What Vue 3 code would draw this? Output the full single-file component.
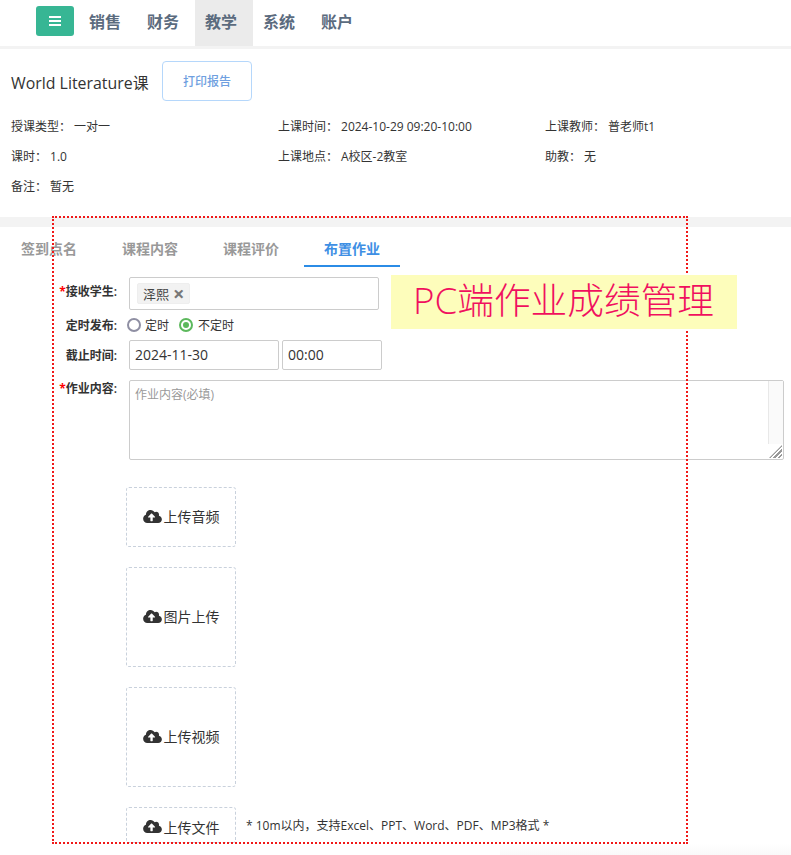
<script setup>
const navItems = ['销售', '财务', '教学', '系统', '账户']

const infoRows = [
  { label: '授课类型', value: '一对一' },
  { label: '上课时间', value: '2024-10-29 09:20-10:00' },
  { label: '上课教师', value: '普老师t1' },
  { label: '课时', value: '1.0' },
  { label: '上课地点', value: 'A校区-2教室' },
  { label: '助教', value: '无' },
  { label: '备注', value: '暂无' },
]

const tabs = ['签到点名', '课程内容', '课程评价', '布置作业']

const uploads = [
  { text: '上传音频', cls: 'short' },
  { text: '图片上传', cls: 'tall' },
  { text: '上传视频', cls: 'tall' },
]
</script>

<template>
  <div class="page">
    <header class="topbar">
      <button class="menu-btn" type="button">
        <svg viewBox="0 0 12 10" class="bars">
          <rect x="0" y="0" width="12" height="2" />
          <rect x="0" y="4" width="12" height="2" />
          <rect x="0" y="8" width="12" height="2" />
        </svg>
      </button>
      <nav class="nav">
        <a v-for="item in navItems" :key="item" class="nav-item" :class="{ active: item === '教学' }">{{ item }}</a>
      </nav>
    </header>

    <section class="info">
      <div class="title-row">
        <h1 class="title">World Literature课</h1>
        <button class="print-btn" type="button">打印报告</button>
      </div>
      <div class="info-grid">
        <div v-for="row in infoRows" :key="row.label" class="info-cell">
          <span class="info-label">{{ row.label }}：</span>
          <span>{{ row.value }}</span>
        </div>
      </div>
    </section>

    <section class="panel">
      <div class="tabs">
        <a v-for="tab in tabs" :key="tab" class="tab" :class="{ active: tab === '布置作业' }">{{ tab }}</a>
      </div>

      <form class="form">
        <div class="row row-student">
          <label class="label"><i>*</i>接收学生:</label>
          <div class="select">
            <span class="tag">泽熙<b>×</b></span>
          </div>
        </div>
        <div class="row row-radio">
          <label class="label">定时发布:</label>
          <span class="radio"></span>
          <span class="radio-text">定时</span>
          <span class="radio on"></span>
          <span class="radio-text">不定时</span>
        </div>
        <div class="row row-date">
          <label class="label">截止时间:</label>
          <div class="input date">2024-11-30</div>
          <div class="input time">00:00</div>
        </div>
        <div class="row row-content">
          <label class="label"><i>*</i>作业内容:</label>
          <div class="textarea">
            作业内容(必填)
            <span class="scroll"></span>
            <span class="grip"></span>
          </div>
        </div>

        <div class="uploads">
          <div v-for="up in uploads" :key="up.text" class="upload" :class="up.cls">
            <svg class="cloud" viewBox="0 0 640 512">
              <path d="M537.6 226.6c4.1-10.7 6.4-22.4 6.4-34.6 0-53-43-96-96-96-19.7 0-38.1 6-53.3 16.2C367 64.2 315.3 32 256 32c-88.4 0-160 71.6-160 160 0 2.7.1 5.4.2 8.1C40.2 219.8 0 273.2 0 336c0 79.5 64.5 144 144 144h368c70.7 0 128-57.3 128-128 0-61.9-44-113.6-102.4-125.4zM393.4 288H328v112c0 8.8-7.2 16-16 16h-48c-8.8 0-16-7.2-16-16V288h-65.4c-14.3 0-21.4-17.2-11.3-27.3l105.4-105.4c6.2-6.2 16.4-6.2 22.6 0l105.4 105.4c10.1 10.1 2.9 27.3-11.3 27.3z" />
            </svg>
            {{ up.text }}
          </div>
          <div class="file-row">
            <div class="upload file">
              <svg class="cloud" viewBox="0 0 640 512">
                <path d="M537.6 226.6c4.1-10.7 6.4-22.4 6.4-34.6 0-53-43-96-96-96-19.7 0-38.1 6-53.3 16.2C367 64.2 315.3 32 256 32c-88.4 0-160 71.6-160 160 0 2.7.1 5.4.2 8.1C40.2 219.8 0 273.2 0 336c0 79.5 64.5 144 144 144h368c70.7 0 128-57.3 128-128 0-61.9-44-113.6-102.4-125.4zM393.4 288H328v112c0 8.8-7.2 16-16 16h-48c-8.8 0-16-7.2-16-16V288h-65.4c-14.3 0-21.4-17.2-11.3-27.3l105.4-105.4c6.2-6.2 16.4-6.2 22.6 0l105.4 105.4c10.1 10.1 2.9 27.3-11.3 27.3z" />
              </svg>
              上传文件
            </div>
            <span class="hint">* 10m以内，支持Excel、PPT、Word、PDF、MP3格式 *</span>
          </div>
        </div>
      </form>
    </section>

    <div class="note-frame"></div>
    <div class="note">PC端作业成绩管理</div>
    <div class="bottom-fade"></div>
  </div>
</template>

<style>
html,
body {
  margin: 0;
  background: #fff;
}
</style>

<style scoped>
.page {
  position: relative;
  width: 791px;
  height: 855px;
  overflow: hidden;
  background: #fff;
  color: #333;
  font-family: "Open Sans", "Noto Sans CJK SC", sans-serif;
  font-size: 12px;
}

.topbar {
  display: flex;
  align-items: flex-start;
  height: 46px;
  padding-left: 36px;
  border-bottom: 3px solid #f3f3f3;
}
.menu-btn {
  display: flex;
  align-items: center;
  justify-content: center;
  width: 38px;
  height: 30px;
  margin-top: 6px;
  padding: 0;
  border: 0;
  border-radius: 3px;
  background: #37b694;
}
.bars {
  width: 12px;
  height: 10px;
  fill: #fff;
}
.nav {
  display: flex;
  margin-left: 5px;
}
.nav-item {
  width: 58px;
  height: 46px;
  padding-left: 10px;
  box-sizing: border-box;
  line-height: 44px;
  font-size: 16px;
  font-weight: 700;
  color: #5b6b7e;
}
.nav-item.active {
  background: #ebebeb;
}

.info {
  height: 178px;
  padding: 12px 0 0 11px;
  box-sizing: border-box;
  border-bottom: 10px solid #f3f3f3;
}
.title-row {
  display: flex;
  align-items: center;
  height: 40px;
}
.title {
  width: 138px;
  margin: 2px 13px 0 0;
  font-size: 15.9px;
  font-weight: 400;
  color: #333;
  white-space: nowrap;
}
.print-btn {
  width: 90px;
  height: 40px;
  padding: 0;
  border: 1px solid #b5d7fb;
  border-radius: 4px;
  background: #fff;
  color: #6f9fe0;
  font: inherit;
  font-size: 12px;
  font-weight: 500;
}
.info-grid {
  display: grid;
  grid-template-columns: repeat(3, 267px);
  grid-auto-rows: 30px;
  margin-top: 11px;
}
.info-cell {
  line-height: 30px;
  white-space: nowrap;
}
.info-label {
  margin-right: 3px;
}

.tabs {
  display: flex;
  height: 40px;
  padding-left: 1px;
}
.tab {
  width: 56px;
  padding: 0 20px;
  margin-right: 5px;
  height: 40px;
  line-height: 43px;
  box-sizing: content-box;
  font-size: 14px;
  font-weight: 600;
  color: #999;
  white-space: nowrap;
}
.tab.active {
  height: 38px;
  color: #3e8fe4;
  border-bottom: 2px solid #2b8ce6;
}

.form {
  padding-top: 10px;
}
.row {
  display: flex;
}
.label {
  width: 117px;
  margin-right: 12px;
  flex: none;
  text-align: right;
  font-size: 12px;
  font-weight: 600;
  color: #333;
}
.label i {
  color: #f00;
  font-size: 12px;
  line-height: 1;
  font-style: normal;
  font-weight: 700;
}
.row-student {
  height: 33px;
}
.row-student .label {
  line-height: 30px;
}
.select {
  display: flex;
  align-items: center;
  width: 250px;
  height: 33px;
  padding-left: 7px;
  box-sizing: border-box;
  border: 1px solid #ccc;
  border-radius: 2px;
}
.tag {
  display: inline-flex;
  align-items: center;
  width: 53px;
  height: 21px;
  padding-left: 5px;
  box-sizing: border-box;
  border: 1px solid #eee;
  border-radius: 2px;
  background: #f2f2f2;
  font-size: 13px;
  color: #444;
}
.tag b {
  margin-left: 4px;
  font-size: 20px;
  line-height: 1;
  color: #777;
}
.row-radio {
  align-items: center;
  height: 30px;
}
.row-radio .label {
  margin-right: 10px;
}
.radio {
  flex: none;
  width: 10px;
  height: 10px;
  border: 2px solid #8f8fa3;
  border-radius: 50%;
}
.radio.on {
  position: relative;
  margin-left: 10px;
  border-color: #5cb85c;
}
.radio.on::after {
  content: "";
  position: absolute;
  inset: 2px;
  border-radius: 50%;
  background: #5cb85c;
}
.radio-text {
  margin-left: 4px;
  color: #333;
}
.radio.on + .radio-text {
  margin-left: 5px;
}
.row-date {
  height: 30px;
}
.row-date .label {
  line-height: 32px;
}
.input {
  height: 30px;
  line-height: 28px;
  padding-left: 5px;
  box-sizing: border-box;
  border: 1px solid #ccc;
  border-radius: 2px;
  font-size: 14px;
  color: #333;
}
.date {
  width: 150px;
}
.time {
  width: 100px;
  margin-left: 3px;
}
.row-content {
  height: 80px;
  margin-top: 10px;
}
.row-content .label {
  line-height: 18px;
}
.textarea {
  position: relative;
  width: 655px;
  height: 80px;
  padding: 6px 5px;
  box-sizing: border-box;
  border: 1px solid #ccc;
  border-radius: 2px;
  color: #999;
  font-size: 12px;
  line-height: 16px;
}
.scroll {
  position: absolute;
  top: 0;
  right: 0;
  width: 14px;
  height: 63px;
  border-left: 1px solid #e8e8e8;
  background: #fafafa;
}
.grip {
  position: absolute;
  right: 1px;
  bottom: 1px;
  width: 13px;
  height: 13px;
  background: repeating-linear-gradient(135deg, #999 0 1.5px, transparent 1.5px 3px);
  clip-path: polygon(100% 0, 100% 100%, 0 100%);
}

.uploads {
  display: flex;
  flex-direction: column;
  gap: 20px;
  margin: 27px 0 0 126px;
}
.upload {
  display: flex;
  align-items: center;
  justify-content: center;
  width: 110px;
  flex: none;
  padding-bottom: 2px;
  box-sizing: border-box;
  border: 1px dashed #c9d1dc;
  border-radius: 3px;
  font-size: 14px;
  color: #333;
}
.short {
  height: 60px;
}
.tall {
  height: 100px;
}
.file {
  height: 36px;
  padding: 3px 0 0;
}
.cloud {
  width: 19px;
  height: 15px;
  margin-right: 2px;
  fill: #333;
}
.file-row {
  display: flex;
  align-items: center;
}
.hint {
  margin-left: 10px;
  font-size: 12px;
  color: #333;
  white-space: nowrap;
}

.note-frame {
  position: absolute;
  left: 52px;
  top: 216px;
  width: 632px;
  height: 624px;
  border: 2px dotted #f01818;
}
.note {
  position: absolute;
  left: 391px;
  top: 275px;
  width: 346px;
  height: 54px;
  padding-left: 22px;
  box-sizing: border-box;
  background: #fdfdbb;
  color: #f0105f;
  font-size: 36.7px;
  font-weight: 200;
  line-height: 50px;
  white-space: nowrap;
}
.bottom-fade {
  position: absolute;
  left: 500px;
  right: 0;
  bottom: 0;
  height: 11px;
  background: linear-gradient(to bottom, #fff, #f9f9f9);
}
</style>
